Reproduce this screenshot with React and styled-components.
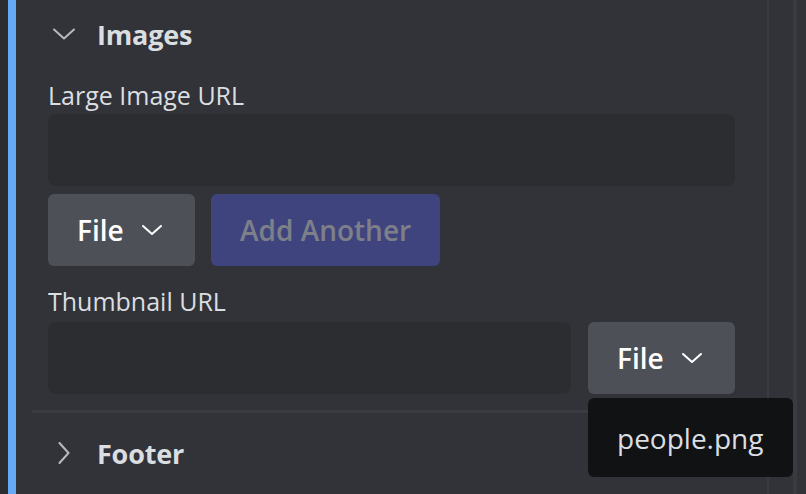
import React from "react";
import styled, { createGlobalStyle } from "styled-components";

const GlobalStyle = createGlobalStyle`
  html, body {
    margin: 0;
    padding: 0;
    background: #313338;
  }
  body {
    font-family: "Open Sans", "Noto Sans", sans-serif;
    color: #dbdee1;
  }
`;

const Page = styled.div`
  display: flex;
  width: 806px;
  height: 494px;
  overflow: hidden;
  background: #313338;
`;

const Gutter = styled.div`
  width: 8px;
  flex-shrink: 0;
  background: #2b2d31;
`;

const Accent = styled.div`
  width: 8px;
  flex-shrink: 0;
  background: #64aaf6;
`;

const Main = styled.div`
  width: 751px;
  flex-shrink: 0;
  padding-left: 16px;
  box-sizing: border-box;
  display: flex;
  flex-direction: column;
`;

const RailLine = styled.div`
  width: ${(props) => props.w}px;
  flex-shrink: 0;
  background: #393b40;
`;

const RailGap = styled.div`
  width: ${(props) => props.w}px;
  flex-shrink: 0;
`;

const SectionHeader = styled.div`
  display: flex;
  align-items: center;
  height: ${(props) => props.h}px;
  padding-left: 21px;
  gap: 22px;
`;

const Title = styled.span`
  font-size: 27px;
  font-weight: 700;
  color: #dbdee1;
  letter-spacing: -0.2px;
`;

const Body = styled.div`
  display: flex;
  flex-direction: column;
  padding: 0 32px 0 16px;
`;

const Label = styled.label`
  display: block;
  font-size: 25px;
  font-weight: 500;
  line-height: 30px;
  color: #dbdee1;
  margin-top: ${(props) => props.top}px;
  margin-bottom: ${(props) => props.bottom}px;
`;

const Input = styled.div`
  height: 72px;
  flex: 1;
  background: #2b2d31;
  border-radius: 8px;
`;

const Row = styled.div`
  display: flex;
  gap: ${(props) => props.gap}px;
  margin-top: ${(props) => props.top || 0}px;
`;

const Button = styled.button`
  height: 72px;
  border: none;
  border-radius: 6px;
  padding: 0 29px;
  display: flex;
  align-items: center;
  gap: 18px;
  font-family: inherit;
  font-size: 28px;
  font-weight: 600;
  background: ${(props) => (props.primary ? "#3f447e" : "#4e5058")};
  color: ${(props) => (props.primary ? "#7e8089" : "#ffffff")};
`;

const FileButton = styled(Button)`
  width: 147px;
`;

const FileWrap = styled.div`
  position: relative;
  flex-shrink: 0;
`;

const Menu = styled.div`
  position: absolute;
  top: 76px;
  left: 0;
  width: 205px;
  height: 79px;
  box-sizing: border-box;
  padding-left: 29px;
  display: flex;
  align-items: center;
  background: #111214;
  border-radius: 6px;
  font-size: 28px;
  color: #dbdee1;
  z-index: 2;
`;

const Divider = styled.div`
  height: 3px;
  background: #3a3c42;
  margin-top: 16px;
`;

function Chevron({ dir = "down", size = 22 }) {
  const points = dir === "down" ? "1,6.5 11,15.5 21,6.5" : "6.5,1 15.5,11 6.5,21";
  return (
    <svg width={size} height={size} viewBox="0 0 22 22" fill="none">
      <polyline points={points} stroke="currentColor" strokeWidth="2" strokeLinecap="round" strokeLinejoin="round" />
    </svg>
  );
}

const Icon = styled.span`
  display: flex;
  color: ${(props) => props.color || "#b5bac1"};
`;

function FileSelect() {
  return (
    <FileButton>
      File
      <Icon color="#ffffff">
        <svg width="20" height="10" viewBox="0 0 20 10" fill="none">
          <polyline points="1,1 10,9 19,1" stroke="currentColor" strokeWidth="2" strokeLinecap="round" strokeLinejoin="round" />
        </svg>
      </Icon>
    </FileButton>
  );
}

export default function App() {
  return (
    <>
      <GlobalStyle />
      <Page>
        <Gutter />
        <Accent />
        <Main>
          <SectionHeader h={68}>
            <Icon>
              <Chevron dir="down" />
            </Icon>
            <Title>Images</Title>
          </SectionHeader>
          <Body>
            <Label top={12} bottom={4}>Large Image URL</Label>
            <Row>
              <Input />
            </Row>
            <Row gap={16} top={8}>
              <FileSelect />
              <Button primary>Add Another</Button>
            </Row>
            <Label top={20} bottom={6}>Thumbnail URL</Label>
            <Row gap={17}>
              <Input />
              <FileWrap>
                <FileSelect />
                <Menu>people.png</Menu>
              </FileWrap>
            </Row>
          </Body>
          <Divider />
          <SectionHeader h={80}>
            <Icon>
              <Chevron dir="right" />
            </Icon>
            <Title>Footer</Title>
          </SectionHeader>
        </Main>
        <RailLine w={2} />
        <RailGap w={24} />
        <RailLine w={4} />
        <RailGap w={9} />
      </Page>
    </>
  );
}
